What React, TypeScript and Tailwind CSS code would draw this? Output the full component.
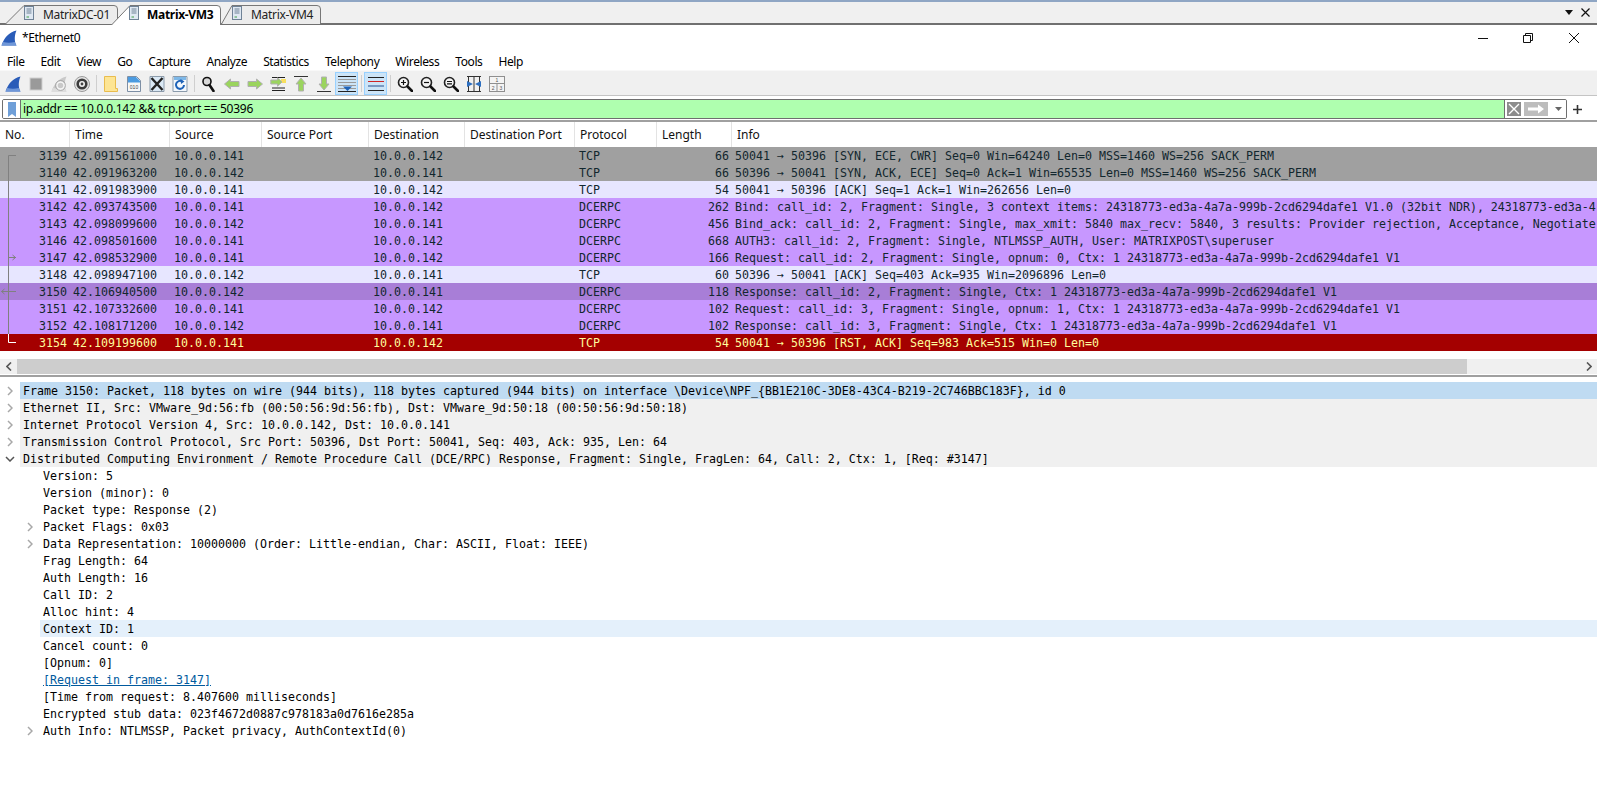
import type { ReactNode } from "react";

const UI = "font-['Noto_Sans',sans-serif]";
const MONO = "font-['DejaVu_Sans_Mono',monospace] text-[11.63px]";

const COLUMNS = [
  { label: "No.", width: 70 },
  { label: "Time", width: 100 },
  { label: "Source", width: 92 },
  { label: "Source Port", width: 107 },
  { label: "Destination", width: 96 },
  { label: "Destination Port", width: 110 },
  { label: "Protocol", width: 82 },
  { label: "Length", width: 75 },
  { label: "Info", width: 0 },
];

const MENU = ["File", "Edit", "View", "Go", "Capture", "Analyze", "Statistics", "Telephony", "Wireless", "Tools", "Help"];

const UUID = "24318773-ed3a-4a7a-999b-2cd6294dafe1";

type Packet = { no: string; time: string; src: string; dst: string; proto: string; len: string; info: string; row: string };

const GREY = "bg-[#a0a0a0] text-[#12272e]";
const TCP = "bg-[#e7e6ff] text-[#12272e]";
const RPC = "bg-[#c797ff] text-[#12272e]";
const SEL = "bg-[#a87ed7] text-[#12272e]";
const RST = "bg-[#a40000] text-[#fffc9c]";

const PACKETS: Packet[] = [
  { no: "3139", time: "42.091561000", src: "10.0.0.141", dst: "10.0.0.142", proto: "TCP", len: "66", info: "50041 → 50396 [SYN, ECE, CWR] Seq=0 Win=64240 Len=0 MSS=1460 WS=256 SACK_PERM", row: GREY },
  { no: "3140", time: "42.091963200", src: "10.0.0.142", dst: "10.0.0.141", proto: "TCP", len: "66", info: "50396 → 50041 [SYN, ACK, ECE] Seq=0 Ack=1 Win=65535 Len=0 MSS=1460 WS=256 SACK_PERM", row: GREY },
  { no: "3141", time: "42.091983900", src: "10.0.0.141", dst: "10.0.0.142", proto: "TCP", len: "54", info: "50041 → 50396 [ACK] Seq=1 Ack=1 Win=262656 Len=0", row: TCP },
  { no: "3142", time: "42.093743500", src: "10.0.0.141", dst: "10.0.0.142", proto: "DCERPC", len: "262", info: `Bind: call_id: 2, Fragment: Single, 3 context items: ${UUID} V1.0 (32bit NDR), 24318773-ed3a-4`, row: RPC },
  { no: "3143", time: "42.098099600", src: "10.0.0.142", dst: "10.0.0.141", proto: "DCERPC", len: "456", info: "Bind_ack: call_id: 2, Fragment: Single, max_xmit: 5840 max_recv: 5840, 3 results: Provider rejection, Acceptance, Negotiate", row: RPC },
  { no: "3146", time: "42.098501600", src: "10.0.0.141", dst: "10.0.0.142", proto: "DCERPC", len: "668", info: "AUTH3: call_id: 2, Fragment: Single, NTLMSSP_AUTH, User: MATRIXPOST\\superuser", row: RPC },
  { no: "3147", time: "42.098532900", src: "10.0.0.141", dst: "10.0.0.142", proto: "DCERPC", len: "166", info: `Request: call_id: 2, Fragment: Single, opnum: 0, Ctx: 1 ${UUID} V1`, row: RPC },
  { no: "3148", time: "42.098947100", src: "10.0.0.142", dst: "10.0.0.141", proto: "TCP", len: "60", info: "50396 → 50041 [ACK] Seq=403 Ack=935 Win=2096896 Len=0", row: TCP },
  { no: "3150", time: "42.106940500", src: "10.0.0.142", dst: "10.0.0.141", proto: "DCERPC", len: "118", info: `Response: call_id: 2, Fragment: Single, Ctx: 1 ${UUID} V1`, row: SEL },
  { no: "3151", time: "42.107332600", src: "10.0.0.141", dst: "10.0.0.142", proto: "DCERPC", len: "102", info: `Request: call_id: 3, Fragment: Single, opnum: 1, Ctx: 1 ${UUID} V1`, row: RPC },
  { no: "3152", time: "42.108171200", src: "10.0.0.142", dst: "10.0.0.141", proto: "DCERPC", len: "102", info: `Response: call_id: 3, Fragment: Single, Ctx: 1 ${UUID} V1`, row: RPC },
  { no: "3154", time: "42.109199600", src: "10.0.0.141", dst: "10.0.0.142", proto: "TCP", len: "54", info: "50041 → 50396 [RST, ACK] Seq=983 Ack=515 Win=0 Len=0", row: RST },
];

type Detail = { text: string; depth: 0 | 1; caret?: "right" | "down"; bg?: string; link?: boolean };

const DETAILS: Detail[] = [
  { text: "Frame 3150: Packet, 118 bytes on wire (944 bits), 118 bytes captured (944 bits) on interface \\Device\\NPF_{BB1E210C-3DE8-43C4-B219-2C746BBC183F}, id 0", depth: 0, caret: "right", bg: "bg-[#bfdbf2]" },
  { text: "Ethernet II, Src: VMware_9d:56:fb (00:50:56:9d:56:fb), Dst: VMware_9d:50:18 (00:50:56:9d:50:18)", depth: 0, caret: "right", bg: "bg-[#f0f0f0]" },
  { text: "Internet Protocol Version 4, Src: 10.0.0.142, Dst: 10.0.0.141", depth: 0, caret: "right", bg: "bg-[#f0f0f0]" },
  { text: "Transmission Control Protocol, Src Port: 50396, Dst Port: 50041, Seq: 403, Ack: 935, Len: 64", depth: 0, caret: "right", bg: "bg-[#f0f0f0]" },
  { text: "Distributed Computing Environment / Remote Procedure Call (DCE/RPC) Response, Fragment: Single, FragLen: 64, Call: 2, Ctx: 1, [Req: #3147]", depth: 0, caret: "down", bg: "bg-[#f0f0f0]" },
  { text: "Version: 5", depth: 1 },
  { text: "Version (minor): 0", depth: 1 },
  { text: "Packet type: Response (2)", depth: 1 },
  { text: "Packet Flags: 0x03", depth: 1, caret: "right" },
  { text: "Data Representation: 10000000 (Order: Little-endian, Char: ASCII, Float: IEEE)", depth: 1, caret: "right" },
  { text: "Frag Length: 64", depth: 1 },
  { text: "Auth Length: 16", depth: 1 },
  { text: "Call ID: 2", depth: 1 },
  { text: "Alloc hint: 4", depth: 1 },
  { text: "Context ID: 1", depth: 1, bg: "bg-[#e4f0fb]" },
  { text: "Cancel count: 0", depth: 1 },
  { text: "[Opnum: 0]", depth: 1 },
  { text: "[Request in frame: 3147]", depth: 1, link: true },
  { text: "[Time from request: 8.407600 milliseconds]", depth: 1 },
  { text: "Encrypted stub data: 023f4672d0887c978183a0d7616e285a", depth: 1 },
  { text: "Auth Info: NTLMSSP, Packet privacy, AuthContextId(0)", depth: 1, caret: "right" },
];

function Fin({ fill = "#2a5cb8", base = "#6f97d8", size = 16 }: { fill?: string; base?: string; size?: number }) {
  return (
    <svg width={size} height={size} viewBox="0 0 16 16">
      <path d="M0.5 15.5 C3 8 8 2 15.5 0.5 C13.5 5 13 11 15.5 15.5 Z" fill={fill} />
      <path d="M0.5 15.5 C1 14 1.6 12.8 2.2 12 C6 13 10 13 13.7 12 C14.2 13.3 14.8 14.5 15.5 15.5 Z" fill={base} />
    </svg>
  );
}

function Glyph({ children }: { children: ReactNode }) {
  return (
    <svg width="16" height="16" viewBox="0 0 16 16" fill="none">
      {children}
    </svg>
  );
}

function Lens({ mark }: { mark?: ReactNode }) {
  return (
    <Glyph>
      <circle cx="6.5" cy="6.5" r="5" fill="#f4f4f4" stroke="#222" strokeWidth="1.6" />
      <path d="M10.5 10.5 L15 15" stroke="#111" strokeWidth="2.6" strokeLinecap="round" />
      {mark}
    </Glyph>
  );
}

function Arrow({ d }: { d: string }) {
  return <path d={d} fill="#9bd45e" stroke="#b0b0b0" strokeWidth="1" strokeLinejoin="round" />;
}

const TOOLS: (ReactNode | null | { on: ReactNode })[] = [
  <Fin />,
  <Glyph>
    <rect x="2" y="2" width="12" height="12" fill="#9a9a9a" stroke="#cfcfcf" />
  </Glyph>,
  <div className="relative">
    <Fin fill="#c9c9c9" base="#dddddd" />
    <svg className="absolute left-0 top-0" width="16" height="16" viewBox="0 0 16 16" fill="none">
      <circle cx="9.5" cy="9.5" r="3.5" stroke="#f5f5f5" strokeWidth="1.4" />
      <circle cx="9.5" cy="9.5" r="5" stroke="#9a9a9a" strokeWidth="0.7" />
    </svg>
  </div>,
  <Glyph>
    <circle cx="8" cy="8" r="7.5" fill="#e4e4e4" stroke="#9a9a9a" />
    <circle cx="8" cy="8" r="5.6" fill="#3c3c3c" />
    <circle cx="8" cy="8" r="3" fill="#f2f2f2" />
    <circle cx="8" cy="8" r="1.4" fill="#444" />
  </Glyph>,
  null,
  <svg width="14" height="16" viewBox="0 0 14 16" fill="none">
    <path d="M0.5 0.5 H11.5 V12.5 H13.5 V15.5 H0.5 Z" fill="#fde594" stroke="#e9bc4e" />
  </svg>,
  <Glyph>
    <path d="M1.5 0.5 H10.5 L14.5 4.5 V15.5 H1.5 Z" fill="#f8f8f8" stroke="#7d8fa5" />
    <path d="M2 1 H10 L14 5 V6.5 H2 Z" fill="#4c9be0" />
    <text x="8" y="13" textAnchor="middle" fontSize="5" fontFamily="Liberation Sans, sans-serif" fill="#444">010</text>
  </Glyph>,
  <Glyph>
    <path d="M1 0.5 H15 V15.5 H1 Z" fill="#dbe9f5" stroke="#8b9bab" />
    <path d="M2.5 2 L13.5 14 M13.5 2 L2.5 14" stroke="#222" strokeWidth="2.4" />
  </Glyph>,
  <Glyph>
    <path d="M1 0.5 H15 V15.5 H1 Z" fill="#f4f8fc" stroke="#8b9bab" />
    <path d="M2 1 H14 V4 H2 Z" fill="#7eb8e8" />
    <path d="M12 9 A4 4 0 1 1 10 5.4" stroke="#1f63b8" strokeWidth="2" />
    <path d="M8.5 3 L12.5 5.5 L9 8 Z" fill="#1f63b8" />
  </Glyph>,
  null,
  <Glyph>
    <circle cx="6" cy="5.5" r="4" fill="#d8d8d8" stroke="#111" strokeWidth="1.6" />
    <path d="M8.5 9 L12.5 15" stroke="#111" strokeWidth="2.6" strokeLinecap="round" />
  </Glyph>,
  <Glyph>
    <Arrow d="M0.5 8 L6.5 3 V5.5 H15 V10.5 H6.5 V13 Z" />
  </Glyph>,
  <Glyph>
    <Arrow d="M15.5 8 L9.5 3 V5.5 H1 V10.5 H9.5 V13 Z" />
  </Glyph>,
  <Glyph>
    <path d="M2 1.5 H15 M2 12 H15 M2 14.5 H15" stroke="#222" />
    <rect x="11" y="3" width="5" height="4" fill="#f7df5e" />
    <Arrow d="M12 6 L7.5 1.8 V4 H0.8 V8 H7.5 V10.2 Z" />
  </Glyph>,
  <Glyph>
    <path d="M1 0.5 H15" stroke="#333" />
    <Arrow d="M8 2 L13 8 H10.5 V15 H5.5 V8 H3 Z" />
  </Glyph>,
  <Glyph>
    <path d="M1 15.5 H15" stroke="#333" />
    <Arrow d="M8 14 L13 8 H10.5 V1 H5.5 V8 H3 Z" />
  </Glyph>,
  {
    on: (
      <svg width="18" height="16" viewBox="0 0 18 16" fill="none">
        <path d="M0 0.5 H18 M0 15.5 H18" stroke="#222" />
        <path d="M0 3.5 H18 M0 6.5 H18 M0 9.5 H18 M0 12.5 H18" stroke="#9a9a9a" />
        <path d="M5 10.5 H14 L9.5 15 Z" fill="#1f63b8" />
      </svg>
    ),
  },
  null,
  {
    on: (
      <svg width="18" height="16" viewBox="0 0 18 16" fill="none">
        <path d="M1 1.5 H17 M1 14.5 H17" stroke="#222" />
        <path d="M1 5.5 H17" stroke="#d02525" />
        <path d="M1 10 H17" stroke="#24508f" />
      </svg>
    ),
  },
  null,
  <Lens mark={<path d="M4 6.5 H9 M6.5 4 V9" stroke="#111" strokeWidth="1.2" />} />,
  <Lens mark={<path d="M4 6.5 H9" stroke="#111" strokeWidth="1.2" />} />,
  <Lens mark={<path d="M4 5.5 H9 M4 7.8 H9" stroke="#111" strokeWidth="1.2" />} />,
  <Glyph>
    <path d="M1 0.5 H15 M1 15.5 H15 M2.5 0.5 V15.5 M8 0.5 V15.5 M13.5 0.5 V15.5" stroke="#333" />
    <path d="M1 5 L7 8 L1 11 Z M15 5 L9 8 L15 11 Z" fill="#2d6fc0" />
  </Glyph>,
  <svg width="16" height="16" viewBox="0 0 16 16" fill="none">
    <rect x="0.5" y="0.5" width="15" height="15" fill="#f4f4f4" stroke="#8f8f8f" />
    <path d="M0.5 7.5 H15.5 M8 7.5 V15.5" stroke="#8f8f8f" />
    <text x="8" y="6" textAnchor="middle" fontSize="5" fontFamily="Liberation Sans, sans-serif" fill="#555">1</text>
    <text x="4.2" y="13.5" textAnchor="middle" fontSize="5" fontFamily="Liberation Sans, sans-serif" fill="#555">2</text>
    <text x="11.8" y="13.5" textAnchor="middle" fontSize="5" fontFamily="Liberation Sans, sans-serif" fill="#555">3</text>
  </svg>,
];

function Toolbar() {
  return (
    <div className="h-[27px] bg-white">
      <div className="flex h-[26px] items-start border-t border-[#f8f8f8] border-b border-b-[#c4c4c4] bg-[#f0f0f0] pl-px pt-px">
        {TOOLS.map((t, i) => {
          if (t === null) {
            return (
              <div key={i} className="flex h-[23px] w-[6px] shrink-0 items-center justify-center">
                <div className="h-[17px] w-px bg-[#cfcfcf]" />
              </div>
            );
          }
          const isOn = typeof t === "object" && "on" in (t as object);
          return (
            <div
              key={i}
              className={`flex h-[23px] w-[23px] shrink-0 items-center justify-center ${isOn ? "border border-[#99d1ff] bg-[#cce4f7]" : ""}`}
            >
              {isOn ? (t as { on: ReactNode }).on : (t as ReactNode)}
            </div>
          );
        })}
      </div>
    </div>
  );
}

function ServerIcon() {
  return (
    <svg width="10" height="14" viewBox="0 0 10 14" fill="none">
      <rect x="0.5" y="0.5" width="9" height="13" fill="#dfe8f2" stroke="#6f8296" />
      <path d="M2.5 3 H7.5 M2.5 5 H7.5 M2.5 7 H7.5" stroke="#6f8296" />
      <path d="M2.5 11 H5" stroke="#3fa046" />
    </svg>
  );
}

function Tab({ label, active, slant, width, textLeft, iconLeft, z }: { label: string; active?: boolean; slant: number; width: number; textLeft: number; iconLeft: number; z: string }) {
  const h = active ? 20 : 19;
  const d = `M0.5 ${h} L${slant} 0.5 H${width - 4} Q${width - 0.5} 0.5 ${width - 0.5} 4 V${h}`;
  return (
    <div className={`relative h-5 shrink-0 ${z}`} style={{ width }}>
      <svg className="absolute inset-0" width={width} height="20" viewBox={`0 0 ${width} 20`}>
        <path d={`${d} Z`} fill={active ? "#ffffff" : "#ececec"} stroke="none" />
        <path d={d} fill="none" stroke="#777" />
      </svg>
      <div className="absolute top-[1px]" style={{ left: iconLeft }}>
        <ServerIcon />
      </div>
      <div
        className={`absolute top-0 h-5 leading-5 text-[12px] tracking-[-0.3px] whitespace-nowrap ${active ? "font-bold text-black" : "text-[#222]"}`}
        style={{ left: textLeft }}
      >
        {label}
      </div>
    </div>
  );
}

function TabBar() {
  return (
    <div className="border-t-2 border-[#8fa6c4]">
      <div className="flex h-[23px] items-end border-b-2 border-[#707070] bg-[#f0f0f0] pl-[5px]">
        <div className="flex -mb-0.5 h-[21px] items-start pt-px">
          <Tab label="MatrixDC-01" slant={19} width={113} textLeft={38} iconLeft={19} z="z-0" />
          <div className="-ml-[7px] z-20">
            <Tab label="Matrix-VM3" active slant={19} width={110} textLeft={36} iconLeft={18} z="z-20" />
          </div>
          <div className="z-10">
            <Tab label="Matrix-VM4" slant={11} width={100} textLeft={30} iconLeft={11} z="z-10" />
          </div>
        </div>
        <div className="ml-auto flex h-[21px] items-center gap-[8px] pr-[7px]">
          <svg width="8" height="5" viewBox="0 0 8 5">
            <path d="M0 0 H8 L4 5 Z" fill="#111" />
          </svg>
          <svg width="9" height="9" viewBox="0 0 9 9">
            <path d="M0.5 0.5 L8.5 8.5 M8.5 0.5 L0.5 8.5" stroke="#111" strokeWidth="1.2" />
          </svg>
        </div>
      </div>
    </div>
  );
}

function TitleBar() {
  return (
    <div className="flex h-[25px] items-center bg-white pl-px">
      <Fin />
      <span className="ml-[5px] text-[12px] tracking-[-0.4px] text-black">*Ethernet0</span>
      <div className="ml-auto flex items-center">
        <svg className="mr-[35px]" width="10" height="10" viewBox="0 0 10 10">
          <path d="M0 5.5 H10" stroke="#111" />
        </svg>
        <svg className="mr-[36px]" width="10" height="10" viewBox="0 0 10 10" fill="none">
          <path d="M0.5 2.5 H7.5 V9.5 H0.5 Z M2.5 2.5 V0.5 H9.5 V7.5 H7.5" stroke="#111" />
        </svg>
        <svg className="mr-[18px]" width="10" height="10" viewBox="0 0 10 10">
          <path d="M0 0 L10 10 M10 0 L0 10" stroke="#111" />
        </svg>
      </div>
    </div>
  );
}

function FilterBar() {
  return (
    <div className="flex h-[25px] items-start border-b-2 border-[#a0a0a0] bg-white pt-0.5 pl-0.5">
      <div className="flex h-[20px] flex-1 overflow-hidden rounded-[2px] border border-[#6f6f6f]">
        <div className="flex w-[17px] items-center justify-center bg-white">
          <svg width="8" height="15" viewBox="0 0 8 15">
            <path d="M0 0 H8 V15 L4 12 L0 15 Z" fill="#6f9fd8" />
          </svg>
        </div>
        <div className="flex-1 border-l border-[#6f6f6f] bg-[#afffaf] pl-0.5 text-[12px] leading-[18px] tracking-[-0.25px] text-black">
          ip.addr == 10.0.0.142 &amp;&amp; tcp.port == 50396
        </div>
        <div className="flex w-[62px] items-center border-l border-[#6f6f6f] bg-white pl-0.5">
          <svg width="14" height="14" viewBox="0 0 14 14">
            <rect width="14" height="14" fill="#8c8c8c" />
            <path d="M2 2 L12 12 M12 2 L2 12" stroke="#fff" strokeWidth="1.4" />
          </svg>
          <svg className="ml-[3px]" width="24" height="14" viewBox="0 0 24 14">
            <rect width="24" height="14" fill="#bdbdbd" />
            <path d="M4 5.5 H14 V2.5 L20 7 L14 11.5 V8.5 H4 Z" fill="#fff" />
          </svg>
          <svg className="ml-[7px]" width="7" height="4" viewBox="0 0 7 4">
            <path d="M0 0 H7 L3.5 4 Z" fill="#666" />
          </svg>
        </div>
      </div>
      <div className="flex h-[20px] w-[30px] items-center pl-[6px]">
        <svg width="9" height="9" viewBox="0 0 9 9">
          <path d="M0 4.5 H9 M4.5 0 V9" stroke="#333" strokeWidth="1.6" />
        </svg>
      </div>
    </div>
  );
}

function PacketList() {
  return (
    <div className="relative">
      <div className="flex h-[25px] bg-white text-[12px] text-[#111]">
        {COLUMNS.map((c) => (
          <div
            key={c.label}
            className="flex shrink-0 items-center border-r border-[#e3e3e3] pl-[5px] pt-px last:flex-1 last:border-r-0"
            style={c.width ? { width: c.width } : undefined}
          >
            {c.label}
          </div>
        ))}
      </div>
      <div className={`${MONO} overflow-hidden`}>
        {PACKETS.map((p) => (
          <div key={p.no} className={`flex h-[17px] items-start whitespace-pre leading-[19px] ${p.row}`}>
            <div className="w-[70px] shrink-0 pr-[3px] text-right">{p.no}</div>
            <div className="w-[100px] shrink-0 pl-[3px]">{p.time}</div>
            <div className="w-[92px] shrink-0 pl-[4px]">{p.src}</div>
            <div className="w-[107px] shrink-0" />
            <div className="w-[96px] shrink-0 pl-[4px]">{p.dst}</div>
            <div className="w-[110px] shrink-0" />
            <div className="w-[82px] shrink-0 pl-[4px]">{p.proto}</div>
            <div className="w-[75px] shrink-0 pr-[3px] text-right">{p.len}</div>
            <div className="shrink-0 pl-[3px]">{p.info}</div>
          </div>
        ))}
      </div>
      {/* conversation bracket in the No. column */}
      <svg className="absolute left-0 top-[25px]" width="20" height="204" viewBox="0 0 20 204" fill="none">
        <path d="M16 8.5 H8.5 V187" stroke="#808080" />
        <path d="M8.5 187 V195.5 H16" stroke="#fff" />
        <path d="M9 110.5 H16 M12.5 108 L15.5 110.5 L12.5 113" stroke="#808080" />
        <path d="M1.5 144.5 H16 M4.5 142 L1.5 144.5 L4.5 147" stroke="#808080" />
      </svg>
    </div>
  );
}

function HScroll() {
  return (
    <div className="mt-2 flex h-[15px] bg-[#f0f0f0]">
      <div className="flex w-[17px] items-center justify-center">
        <svg width="6" height="9" viewBox="0 0 6 9" fill="none">
          <path d="M5 0.5 L1 4.5 L5 8.5" stroke="#555" strokeWidth="1.6" />
        </svg>
      </div>
      <div className="w-[1450px] bg-[#cdcdcd]" />
      <div className="flex flex-1 items-center justify-end pr-[5px]">
        <svg width="6" height="9" viewBox="0 0 6 9" fill="none">
          <path d="M1 0.5 L5 4.5 L1 8.5" stroke="#555" strokeWidth="1.6" />
        </svg>
      </div>
    </div>
  );
}

function Caret({ dir }: { dir: "right" | "down" }) {
  return dir === "right" ? (
    <svg width="6" height="10" viewBox="0 0 6 10" fill="none">
      <path d="M1 1 L5 5 L1 9" stroke="#a8a8a8" strokeWidth="1.5" />
    </svg>
  ) : (
    <svg width="10" height="6" viewBox="0 0 10 6" fill="none">
      <path d="M1 1 L5 5 L9 1" stroke="#555" strokeWidth="1.5" />
    </svg>
  );
}

function DetailTree() {
  return (
    <div className={`${MONO} mt-px border-t-2 border-[#a0a0a0] pt-[5px] text-black`}>
      {DETAILS.map((d) => (
        <div key={d.text} className={`flex h-[17px] items-center whitespace-pre ${d.depth === 0 ? "pl-0" : "pl-5"}`}>
          <div className="flex w-5 shrink-0 items-center justify-center">{d.caret && <Caret dir={d.caret} />}</div>
          <div className={`h-[17px] flex-1 pl-[3px] leading-[19px] ${d.bg ?? ""}`}>
            {d.link ? <span className="text-[#005a9e] underline">{d.text}</span> : d.text}
          </div>
        </div>
      ))}
    </div>
  );
}

export default function App() {
  return (
    <div className={`${UI} h-[790px] w-[1597px] overflow-hidden bg-white`}>
      <TabBar />
      <TitleBar />
      <div className="flex h-5 items-center gap-4 pl-[7px] pt-1 text-[12px] tracking-[-0.4px] text-black">
        {MENU.map((m) => (
          <span key={m}>{m}</span>
        ))}
      </div>
      <Toolbar />
      <FilterBar />
      <PacketList />
      <HScroll />
      <DetailTree />
    </div>
  );
}
